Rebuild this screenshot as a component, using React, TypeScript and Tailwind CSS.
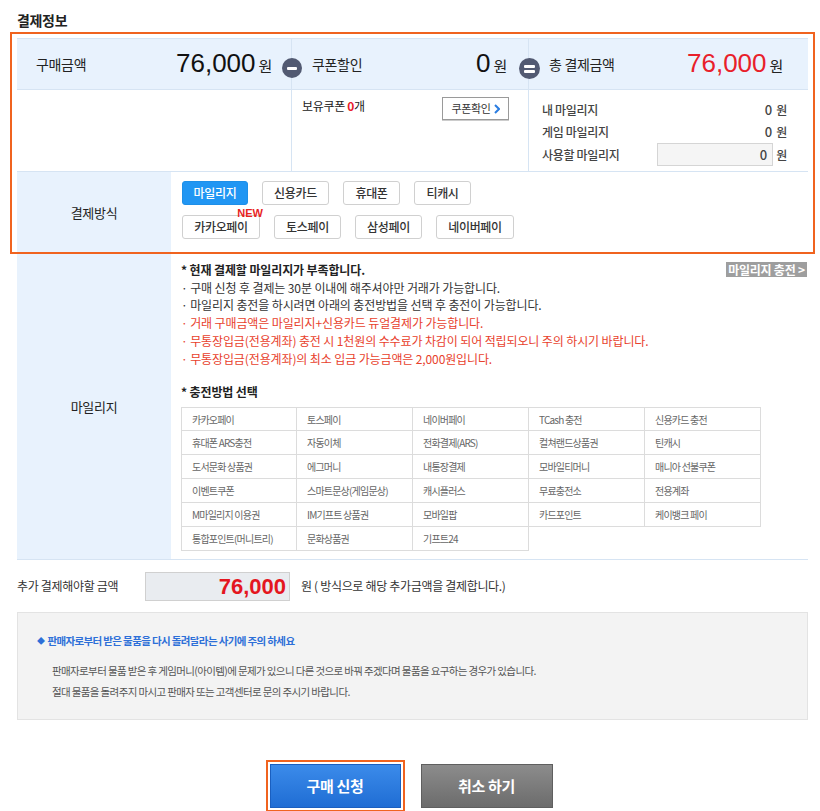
import React from "react";

const charge: string[] = [
  "카카오페이", "토스페이", "네이버페이", "TCash 충전", "신용카드 충전",
  "휴대폰 ARS충전", "자동이체", "전화결제(ARS)", "컬쳐랜드상품권", "틴캐시",
  "도서문화 상품권", "에그머니", "내통장결제", "모바일티머니", "매니아 선불쿠폰",
  "이벤트쿠폰", "스마트문상(게임문상)", "캐시플러스", "무료충전소", "전용계좌",
  "M마일리지 이용권", "IM기프트 상품권", "모바일팝", "카드포인트", "케이뱅크 페이",
  "통합포인트(머니트리)", "문화상품권", "기프트24",
];

function PayBtn({ label, w, active, isNew }: { label: string; w: number; active?: boolean; isNew?: boolean }) {
  return (
    <div
      style={{ width: w }}
      className={
        active
          ? "relative flex h-[24px] items-center justify-center rounded-[3px] border border-[#1e8fe8] bg-[#2196f3] text-[12px] font-medium text-white"
          : "relative flex h-[24px] items-center justify-center rounded-[3px] border border-[#d0d0d0] bg-white text-[12px] font-medium text-[#333]"
      }
    >
      {label}
      {isNew && (
        <span className="absolute right-[-4px] top-[-8px] font-['Liberation_Sans',sans-serif] text-[11px] font-bold leading-[11px] tracking-normal text-[#e8231e]">
          NEW
        </span>
      )}
    </div>
  );
}

export default function App() {
  return (
    <div className="relative h-[811px] w-[820px] overflow-hidden bg-white font-['Noto_Sans_CJK_KR',sans-serif] tracking-[-0.02em] text-[#333]">
      <div className="h-[38px] pl-[17px] pt-[12px] text-[14px] font-bold leading-[16px] text-[#222]">결제정보</div>

      <div className="ml-[17px] w-[791px]">
        {/* row 1 */}
        <div className="relative flex h-[52px] border-y border-[#d6e4f3] bg-[#e8f2fd]">
          <div className="flex w-[275px] items-center justify-between border-r border-[#d6e4f3] pl-[19px] pr-[19px]">
            <span className="text-[14px] text-[#222]">구매금액</span>
            <span className="flex items-baseline">
              <span className="font-['Liberation_Sans',sans-serif] text-[26px] leading-none tracking-normal text-[#111]">76,000</span>
              <span className="ml-[3px] text-[15px] text-[#222]">원</span>
            </span>
          </div>
          <div className="flex w-[237px] items-center justify-between border-r border-[#d6e4f3] pl-[20px] pr-[21px]">
            <span className="text-[14px] text-[#222]">쿠폰할인</span>
            <span className="flex items-baseline">
              <span className="font-['Liberation_Sans',sans-serif] text-[26px] leading-none tracking-normal text-[#111]">0</span>
              <span className="ml-[3px] text-[15px] text-[#222]">원</span>
            </span>
          </div>
          <div className="flex flex-1 items-center justify-between pl-[20px] pr-[25px]">
            <span className="text-[14px] text-[#222]">총 결제금액</span>
            <span className="flex items-baseline">
              <span className="font-['Liberation_Sans',sans-serif] text-[26px] leading-none tracking-normal text-[#e8202a]">76,000</span>
              <span className="ml-[3px] text-[15px] text-[#222]">원</span>
            </span>
          </div>
          <div className="absolute left-[265px] top-[19px] flex h-[20px] w-[20px] items-center justify-center rounded-full bg-[#525a72]">
            <div className="h-[3px] w-[10px] rounded-[1px] bg-white" />
          </div>
          <div className="absolute left-[502px] top-[19px] flex h-[21px] w-[21px] flex-col items-center justify-center gap-[2px] rounded-full bg-[#525a72]">
            <div className="h-[3px] w-[11px] rounded-[1px] bg-white" />
            <div className="h-[3px] w-[11px] rounded-[1px] bg-white" />
          </div>
        </div>

        {/* row 2 */}
        <div className="flex h-[82px] border-b border-[#d6e4f3]">
          <div className="w-[275px] border-r border-[#d6e4f3]" />
          <div className="flex w-[237px] items-start justify-between border-r border-[#d6e4f3] pl-[10px] pr-[19px] pt-[7px]">
            <span className="mt-[1px] text-[12px] leading-[16px] text-[#222]">
              보유쿠폰 <b className="font-bold text-[#e8202a]">0</b>개
            </span>
            <div className="flex h-[23px] w-[67px] items-center justify-center gap-[3px] border border-[#9a9a9a] bg-white text-[11px] text-[#333] shadow-[0_1px_0_#ccc]">
              쿠폰확인
              <svg width="6" height="10" viewBox="0 0 6 10">
                <polyline points="1,1 5,5 1,9" fill="none" stroke="#2a7de1" strokeWidth="2" />
              </svg>
            </div>
          </div>
          <div className="flex flex-1 flex-col pl-[13px] pr-[21px] pt-[9px] text-[12px] font-medium text-[#444]">
            <div className="flex h-[22px] items-center justify-between">
              <span>내 마일리지</span>
              <span className="flex items-baseline gap-[4px]"><span className="text-[13px] tracking-normal">0</span><span>원</span></span>
            </div>
            <div className="flex h-[22px] items-center justify-between">
              <span>게임 마일리지</span>
              <span className="flex items-baseline gap-[4px]"><span className="text-[13px] tracking-normal">0</span><span>원</span></span>
            </div>
            <div className="flex h-[23px] items-center justify-between">
              <span>사용할 마일리지</span>
              <span className="flex items-center gap-[3px]">
                <span className="flex h-[23px] w-[116px] items-center justify-end border border-[#d5d5d5] bg-[#f5f5f5] pr-[5px] text-[13px] tracking-normal">0</span>
                <span>원</span>
              </span>
            </div>
          </div>
        </div>

        {/* row 3 */}
        <div className="flex h-[82px]">
          <div className="flex w-[154px] items-center justify-center bg-[#e8f2fd] text-[13px] text-[#222]">결제방식</div>
          <div className="flex flex-col gap-[10px] pl-[11px] pt-[9px]">
            <div className="flex gap-[14px]">
              <PayBtn label="마일리지" w={66} active />
              <PayBtn label="신용카드" w={67} />
              <PayBtn label="휴대폰" w={57} />
              <PayBtn label="티캐시" w={57} />
            </div>
            <div className="flex gap-[14px]">
              <PayBtn label="카카오페이" w={78} isNew />
              <PayBtn label="토스페이" w={67} />
              <PayBtn label="삼성페이" w={67} />
              <PayBtn label="네이버페이" w={78} />
            </div>
          </div>
        </div>

        {/* row 4 */}
        <div className="flex h-[306px] border-b border-[#d6e4f3]">
          <div className="flex w-[154px] items-center justify-center bg-[#e8f2fd] text-[13px] text-[#222]">마일리지</div>
          <div className="flex-1 pl-[10px] pr-[1px] pt-[7px] text-[12px] leading-[17.7px] tracking-[-0.01em]">
            <div className="flex items-center justify-between">
              <span className="font-bold text-[#222]">* 현재 결제할 마일리지가 부족합니다.</span>
              <span className="flex h-[15px] w-[81px] items-center justify-center bg-[#9e9e9e] text-[12px] font-bold leading-[15px] tracking-[-0.02em] text-white">마일리지 충전 &gt;</span>
            </div>
            <div className="text-[#333]">· 구매 신청 후 결제는 30분 이내에 해주셔야만 거래가 가능합니다.</div>
            <div className="text-[#333]">· 마일리지 충전을 하시려면 아래의 충전방법을 선택 후 충전이 가능합니다.</div>
            <div className="text-[#e8412c]">· 거래 구매금액은 마일리지+신용카드 듀얼결제가 가능합니다.</div>
            <div className="text-[#e8412c]">· 무통장입금(전용계좌) 충전 시 1천원의 수수료가 차감이 되어 적립되오니 주의 하시기 바랍니다.</div>
            <div className="text-[#e8412c]">· 무통장입금(전용계좌)의 최소 입금 가능금액은 2,000원입니다.</div>
            <div className="mt-[16px] font-bold text-[#222]">* 충전방법 선택</div>
            <div className="mt-[6px] grid w-[580px] grid-cols-5">
              {charge.map((c, i) => (
                <div
                  key={i}
                  className={
                    (i < 5 ? "border-t " : "") +
                    (i % 5 === 0 ? "border-l " : "") +
                    "h-[24px] border-b border-r border-[#dcdcdc] pl-[10px] text-[10px] leading-[23px] tracking-[-0.08em] text-[#666]"
                  }
                >
                  {c}
                </div>
              ))}
            </div>
          </div>
        </div>

        {/* additional amount */}
        <div className="flex h-[53px] items-center border-b border-[#e3e3e3]">
          <span className="w-[128px] text-[12px] text-[#333]">추가 결제해야할 금액</span>
          <span className="flex h-[29px] w-[145px] items-center justify-end border border-[#d0d0d0] bg-[#e9ecf0] pr-[3px] font-['Liberation_Sans',sans-serif] text-[22px] font-bold tracking-normal text-[#e4161f]">
            76,000
          </span>
          <span className="ml-[11px] text-[12px] text-[#333]">원 ( 방식으로 해당 추가금액을 결제합니다.)</span>
        </div>

        {/* warning */}
        <div className="h-[107px] border border-t-0 border-[#e3e3e3] bg-[#f3f3f3] pl-[19px] pt-[21px]">
          <div className="flex items-center gap-[3px] text-[10.5px] font-bold leading-[14px] tracking-[-0.06em] text-[#2d6fd8]">
            <span className="text-[8px]">◆</span>
            판매자로부터 받은 물품을 다시 돌려달라는 사기에 주의 하세요
          </div>
          <div className="mt-[12px] pl-[15px] text-[10.5px] leading-[21px] tracking-[-0.06em] text-[#555]">
            <div>판매자로부터 물품 받은 후 게임머니(아이템)에 문제가 있으니 다른 것으로 바꿔 주겠다며 물품을 요구하는 경우가 있습니다.</div>
            <div>절대 물품을 돌려주지 마시고 판매자 또는 고객센터로 문의 주시기 바랍니다.</div>
          </div>
        </div>
      </div>

      {/* buttons */}
      <div className="mt-[40px] flex items-center justify-center gap-[16px] pr-[2px]">
        <div className="border-2 border-[#f0631f] p-[2px]">
          <div className="flex h-[44px] w-[131px] items-center justify-center border border-[#1a5fc0] bg-gradient-to-b from-[#3b8bea] to-[#1f6dd4] text-[15px] font-bold text-white">
            구매 신청
          </div>
        </div>
        <div className="flex h-[44px] w-[132px] items-center justify-center border border-[#5f5f5f] bg-gradient-to-b from-[#8c8c8c] to-[#6c6c6c] text-[15px] font-bold text-white">
          취소 하기
        </div>
      </div>

      {/* orange highlight overlay */}
      <div className="pointer-events-none absolute left-[10px] top-[32px] h-[222px] w-[805px] border-2 border-[#f0631f]" />
    </div>
  );
}
